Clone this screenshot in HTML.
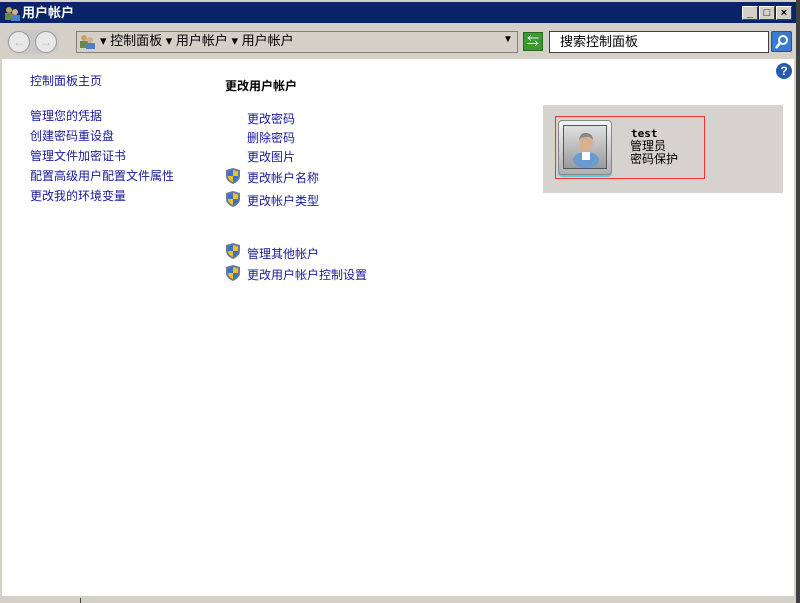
<!DOCTYPE html>
<html><head><meta charset="utf-8"><style>
*{margin:0;padding:0;box-sizing:border-box}
body{width:800px;height:603px;background:#d4d0c8;position:relative;overflow:hidden;font-family:"Liberation Sans","Noto Sans CJK SC",sans-serif;font-size:12px}
.abs{position:absolute}
.title{left:0;top:2px;width:796px;height:21px;background:#0a246a;color:#fff;font-weight:bold;font-size:13px;line-height:21px;padding-left:22px}
.wb{top:6px;width:16px;height:14px;background:#d4d0c8;border:1px solid;border-color:#fff #404040 #404040 #fff;font-size:11px;line-height:12px;text-align:center;color:#000;font-weight:bold}
.content{left:2px;top:59px;width:792px;height:537px;background:#fff}
a{color:#0a1c8a;text-decoration:none}
.l{position:absolute;white-space:nowrap;color:#1a1a9a}
.shield{position:absolute;width:14px;height:16px}
</style></head><body>
<div class="abs" style="left:796px;top:0;width:4px;height:603px;background:#404040"></div>
<div class="abs title">用户帐户</div>
<svg class="abs" style="left:3px;top:5px" width="18" height="16"><circle cx="6" cy="5" r="3" fill="#c9a060"/><rect x="2" y="8" width="8" height="7" fill="#6a8a40"/><circle cx="12" cy="7" r="3" fill="#d8b080"/><rect x="8" y="10" width="9" height="6" fill="#4a80c8"/></svg>
<div class="abs wb" style="left:742px">_</div>
<div class="abs wb" style="left:759px">□</div>
<div class="abs wb" style="left:776px">×</div>
<!-- nav -->
<div class="abs" style="left:7px;top:30px;width:52px;height:24px;border-radius:12px;background:#c8c8c8"></div>
<div class="abs" style="left:8px;top:31px;width:22px;height:22px;border-radius:50%;background:#e8e8e8;border:1px solid #999;color:#bbb;text-align:center;line-height:20px">←</div>
<div class="abs" style="left:35px;top:31px;width:22px;height:22px;border-radius:50%;background:#e8e8e8;border:1px solid #999;color:#bbb;text-align:center;line-height:20px">→</div>
<div class="abs" style="left:76px;top:31px;width:442px;height:22px;border:1px solid #808080;background:#d4d0c8"></div>
<svg class="abs" style="left:78px;top:33px" width="18" height="16"><circle cx="6" cy="5" r="3" fill="#c9a060"/><rect x="2" y="8" width="8" height="7" fill="#6a8a40"/><circle cx="12" cy="7" r="3" fill="#d8b080"/><rect x="8" y="10" width="9" height="6" fill="#4a80c8"/></svg>
<div class="abs" style="left:100px;top:33px;font-size:13px;line-height:16px;white-space:nowrap">▾ 控制面板 ▾ 用户帐户 ▾ 用户帐户</div>
<div class="abs" style="left:503px;top:34px;font-size:10px">▼</div>
<div class="abs" style="left:523px;top:32px;width:20px;height:19px;background:#3a9a30;border:1px solid #2a6a20;color:#fff;font-size:12px;text-align:center;line-height:17px">⇆</div>
<div class="abs" style="left:549px;top:31px;width:220px;height:22px;background:#fff;border:1px solid #404040;font-size:13px;line-height:20px;padding-left:10px">搜索控制面板</div>
<div class="abs" style="left:771px;top:31px;width:21px;height:21px;background:#3a7ad0;border:1px solid #2050a0;border-radius:2px"></div>
<svg class="abs" style="left:774px;top:34px" width="16" height="16"><circle cx="9" cy="6" r="4" stroke="#fff" stroke-width="2" fill="none"/><line x1="6" y1="9" x2="2" y2="14" stroke="#fff" stroke-width="2.5"/></svg>
<div class="abs content"></div>
<div class="abs" style="left:776px;top:63px;width:16px;height:16px;border-radius:50%;background:#2a5ab0;color:#fff;font-weight:bold;font-size:12px;text-align:center;line-height:16px">?</div>
<div class="l" style="left:30px;top:72px">控制面板主页</div>
<div class="l" style="left:30px;top:107px">管理您的凭据</div>
<div class="l" style="left:30px;top:127px">创建密码重设盘</div>
<div class="l" style="left:30px;top:147px">管理文件加密证书</div>
<div class="l" style="left:30px;top:167px">配置高级用户配置文件属性</div>
<div class="l" style="left:30px;top:187px">更改我的环境变量</div>
<div class="abs" style="left:225px;top:77px;font-weight:bold;white-space:nowrap">更改用户帐户</div>
<div class="l" style="left:247px;top:110px">更改密码</div>
<div class="l" style="left:247px;top:129px">删除密码</div>
<div class="l" style="left:247px;top:148px">更改图片</div>
<div class="l" style="left:247px;top:169px">更改帐户名称</div>
<div class="l" style="left:247px;top:192px">更改帐户类型</div>
<div class="l" style="left:247px;top:245px">管理其他帐户</div>
<div class="l" style="left:247px;top:266px">更改用户帐户控制设置</div>
<svg width="0" height="0" style="position:absolute"><defs><g id="sh"><path d="M7 0 L14 2 L14 8 Q14 13 7 16 Q0 13 0 8 L0 2Z" fill="#6a7a9a"/><path d="M7 2 L12 3.5 L12 8 L7 8Z" fill="#f0c020"/><path d="M2 3.5 L7 2 L7 8 L2 8Z" fill="#3a70d0"/><path d="M2 8 L7 8 L7 14 Q2 12 2 8Z" fill="#f0c020"/><path d="M7 8 L12 8 Q12 12 7 14Z" fill="#3a70d0"/></g></defs></svg>
<svg class="shield" style="left:226px;top:168px"><use href="#sh"/></svg>
<svg class="shield" style="left:226px;top:191px"><use href="#sh"/></svg>
<svg class="shield" style="left:226px;top:243px"><use href="#sh"/></svg>
<svg class="shield" style="left:226px;top:265px"><use href="#sh"/></svg>
<div class="abs" style="left:543px;top:105px;width:240px;height:88px;background:#d6d3ce"></div>
<div class="abs" style="left:555px;top:116px;width:150px;height:63px;border:1px solid #ff3030"></div>
<div class="abs" style="left:558px;top:120px;width:54px;height:55px;border-radius:4px;background:linear-gradient(#f4f4f4,#b0b0b0);border:1px solid #888;box-shadow:0 2px 0 #60c8e0"></div>
<div class="abs" style="left:563px;top:125px;width:44px;height:44px;border:1px solid #555;background:linear-gradient(#e0e0e0,#9a9a9a)"></div>
<svg class="abs" style="left:570px;top:130px" width="32" height="38"><ellipse cx="16" cy="30" rx="13" ry="8" fill="#6a9ad0"/><rect x="12" y="22" width="8" height="8" fill="#fff"/><ellipse cx="16" cy="12" rx="7" ry="9" fill="#d8b090"/><path d="M9 10 Q10 2 17 3 Q23 4 23 10 Q20 6 16 7 Q11 7 9 10Z" fill="#888"/></svg>
<div class="abs" style="left:631px;top:128px;font-family:'DejaVu Sans Mono',monospace;font-weight:bold;font-size:11px;line-height:12px">test</div>
<div class="abs" style="left:630px;top:140px;font-size:12px;line-height:13px">管理员<br>密码保护</div>
<div class="abs" style="left:80px;top:598px;width:1px;height:5px;background:#404040"></div>
</body></html>
